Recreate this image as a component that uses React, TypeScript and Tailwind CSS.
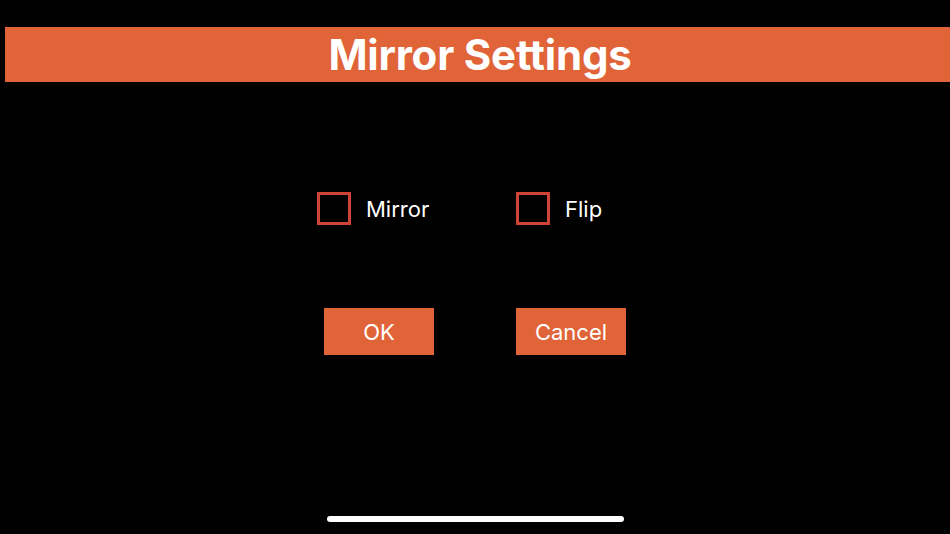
export default function App() {
  return (
    <div className="relative h-[534px] w-[950px] overflow-hidden bg-black font-['Inter','Liberation_Sans',sans-serif] text-white">
      {/* Title bar */}
      <div className="ml-[5px] mt-[27px] flex h-[55px] items-center justify-center bg-[#e06438]">
        <h1 className="ml-[5px] text-[42px] font-bold leading-none tracking-[-0.2px]">Mirror Settings</h1>
      </div>

      {/* Options */}
      <div className="ml-[317px] mt-[110px] flex items-center">
        <label className="flex w-[199px] items-center gap-[15px]">
          <span className="h-[33px] w-[34px] border-[3px] border-[#cf4436]" />
          <span className="text-[22px] leading-none">Mirror</span>
        </label>
        <label className="flex items-center gap-[15px]">
          <span className="h-[33px] w-[34px] border-[3px] border-[#cf4436]" />
          <span className="text-[22px] leading-none">Flip</span>
        </label>
      </div>

      {/* Actions */}
      <div className="ml-[324px] mt-[83px] flex gap-[82px]">
        <button className="flex h-[47px] w-[110px] items-center justify-center bg-[#e06438] text-[22px] leading-none">
          OK
        </button>
        <button className="flex h-[47px] w-[110px] items-center justify-center bg-[#e06438] text-[22px] leading-none">
          Cancel
        </button>
      </div>

      {/* Home indicator */}
      <div className="absolute left-[327px] top-[516px] h-[6px] w-[297px] rounded-full bg-white" />
    </div>
  );
}
